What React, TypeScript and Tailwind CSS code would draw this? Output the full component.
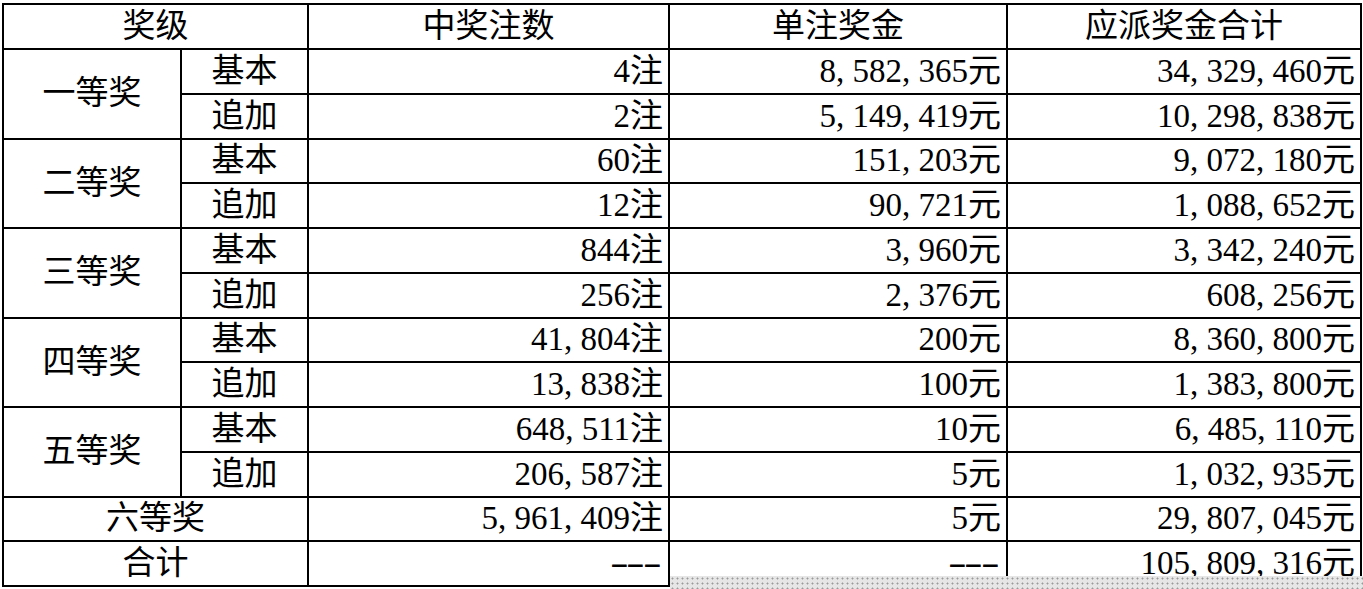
import React from 'react';

const rows = [
  { level: '一等奖', items: [
    { kind: '基本', count: '4注', prize: '8,582,365元', total: '34,329,460元' },
    { kind: '追加', count: '2注', prize: '5,149,419元', total: '10,298,838元' },
  ]},
  { level: '二等奖', items: [
    { kind: '基本', count: '60注', prize: '151,203元', total: '9,072,180元' },
    { kind: '追加', count: '12注', prize: '90,721元', total: '1,088,652元' },
  ]},
  { level: '三等奖', items: [
    { kind: '基本', count: '844注', prize: '3,960元', total: '3,342,240元' },
    { kind: '追加', count: '256注', prize: '2,376元', total: '608,256元' },
  ]},
  { level: '四等奖', items: [
    { kind: '基本', count: '41,804注', prize: '200元', total: '8,360,800元' },
    { kind: '追加', count: '13,838注', prize: '100元', total: '1,383,800元' },
  ]},
  { level: '五等奖', items: [
    { kind: '基本', count: '648,511注', prize: '10元', total: '6,485,110元' },
    { kind: '追加', count: '206,587注', prize: '5元', total: '1,032,935元' },
  ]},
];

// SimSun-style commas take half an em, like the digits
function Num({ value }: { value: string }) {
  const parts = value.split(',');
  return (
    <>
      {parts.map((p, i) => (
        <React.Fragment key={i}>
          {i > 0 && <span className="inline-block w-[0.5em] text-left">,</span>}
          {p}
        </React.Fragment>
      ))}
    </>
  );
}

function Dashes() {
  return (
    <>
      {['-', '-', '-'].map((d, i) => (
        <span key={i} className="inline-block w-[0.5em] text-center scale-x-[1.7]">{d}</span>
      ))}
    </>
  );
}

const cell = 'border-2 border-black px-[5px] leading-none';

export default function App() {
  return (
    <div
      className="relative w-[1363px] h-[589px] bg-white text-black overflow-hidden"
      style={{ fontFamily: '"Liberation Serif", "Noto Sans CJK SC", serif' }}
    >
      <div className="pt-[3px] pl-[2px]">
        <table className="w-[1358px] border-collapse table-fixed text-[33px]">
          <colgroup>
            <col className="w-[178px]" />
            <col className="w-[127px]" />
            <col className="w-[361px]" />
            <col className="w-[338px]" />
            <col className="w-[354px]" />
          </colgroup>
          <thead>
            <tr className="h-[45px]">
              <th colSpan={2} className={`${cell} font-normal text-center`}>奖级</th>
              <th className={`${cell} font-normal text-center`}>中奖注数</th>
              <th className={`${cell} font-normal text-center`}>单注奖金</th>
              <th className={`${cell} font-normal text-center`}>应派奖金合计</th>
            </tr>
          </thead>
          <tbody>
            {rows.map((g) =>
              g.items.map((r, i) => (
                <tr key={g.level + r.kind} className="h-[44.75px]">
                  {i === 0 && (
                    <td rowSpan={2} className={`${cell} text-center`}>{g.level}</td>
                  )}
                  <td className={`${cell} text-center`}>{r.kind}</td>
                  <td className={`${cell} text-right`}><Num value={r.count} /></td>
                  <td className={`${cell} text-right`}><Num value={r.prize} /></td>
                  <td className={`${cell} text-right`}><Num value={r.total} /></td>
                </tr>
              ))
            )}
            <tr className="h-[44.75px]">
              <td colSpan={2} className={`${cell} text-center`}>六等奖</td>
              <td className={`${cell} text-right`}><Num value="5,961,409注" /></td>
              <td className={`${cell} text-right`}>5元</td>
              <td className={`${cell} text-right`}><Num value="29,807,045元" /></td>
            </tr>
            <tr className="h-[44.75px]">
              <td colSpan={2} className={`${cell} text-center`}>合计</td>
              <td className={`${cell} text-right pr-[8px]`}><Dashes /></td>
              <td className={`${cell} text-right pr-[8px]`}><Dashes /></td>
              <td className={`${cell} text-right`}><Num value="105,809,316元" /></td>
            </tr>
          </tbody>
        </table>
      </div>
      <div className="absolute left-[670px] top-[576px] right-0 bottom-0 bg-[#e6e6e6] bg-[radial-gradient(#9a9a9a_0.9px,transparent_1.1px)] bg-[length:5px_5px]" />
    </div>
  );
}
